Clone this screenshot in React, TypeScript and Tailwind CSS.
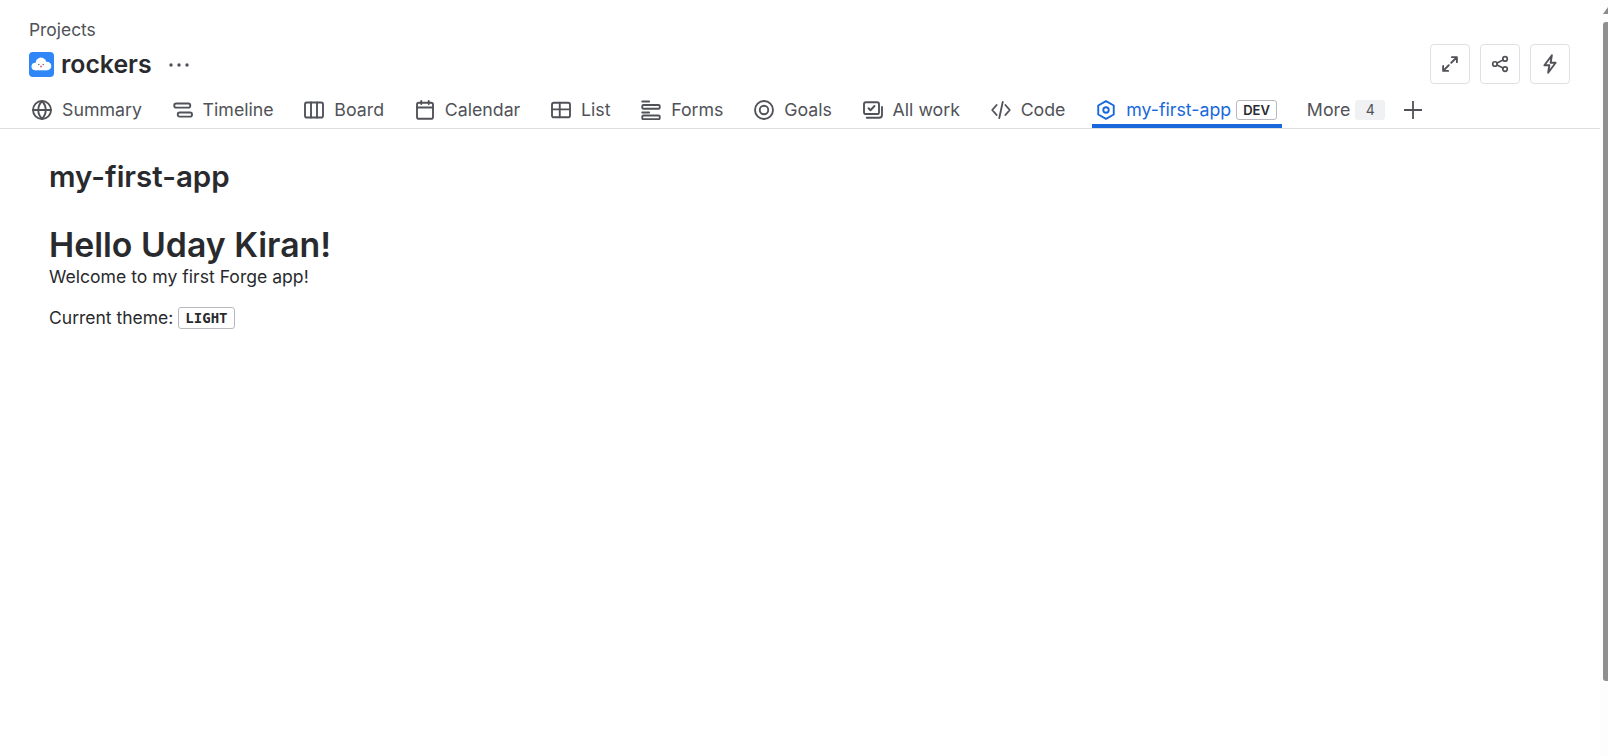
import React from "react";

const S = { fill: "none", stroke: "currentColor", strokeWidth: 1.5, strokeLinecap: "round", strokeLinejoin: "round" } as const;

const icons: Record<string, React.ReactNode> = {
  globe: <><circle cx="8" cy="8" r="7.2" /><path d="M.8 8h14.400M8 .8C10 3 11 5.400 11 8s-1 5-3 7.200C6 13 5 10.600 5 8s1-5 3-7.200Z" /></>,
  timeline: <><rect x="1" y="2.750" width="12.800" height="3.300" rx="1.500" /><rect x="3.800" y="10" width="11.400" height="3.300" rx="1.500" /></>,
  board: <><rect x=".8" y="2" width="14.400" height="12" rx="1.500" /><path d="M5.600 2v12M10.400 2v12" /></>,
  calendar: <><rect x="1.600" y="2.200" width="12.800" height="12.800" rx="1.500" /><path d="M1.600 6h12.800M5 .8v2.400M11 .8v2.400" /></>,
  list: <><rect x=".8" y="2.200" width="14.400" height="11.600" rx="1.500" /><path d="M.8 7.500h14.400M7 2.200v11.600" /></>,
  forms: <><path d="M1 1.200h5.500" /><rect x="1" y="4" width="14" height="3" rx="1" /><path d="M1 10h5.500" /><rect x="1" y="12.400" width="14" height="3" rx="1" /></>,
  goals: <><circle cx="8" cy="8" r="7.200" /><circle cx="8" cy="8" r="3.400" /></>,
  allwork: <><rect x=".8" y="1.800" width="12" height="9.400" rx="1.500" /><path d="m4.400 6.600 1.600 1.600 3.200-3.400M3 14.200h10a2.200 2.200 0 0 0 2.200-2.200V5.500" /></>,
  code: <><path d="M4.500 4 1 8l3.500 4M11.500 4 15 8l-3.500 4M9.400 1.500 6.600 14.500" /></>,
  hex: <><path d="M8 .9l6.200 3.500v7.200L8 15.100l-6.200-3.500V4.400Z" /><circle cx="8" cy="8" r="2.200" /></>,
};

function Glyph({ name, size = 20 }: { name: string; size?: number }) {
  return (
    <svg width={size} height={size} viewBox="0 0 16 16" {...S} className="shrink-0">
      {icons[name]}
    </svg>
  );
}

function Tab({ icon, label }: { icon: string; label: string }) {
  return (
    <div className="flex h-[37px] items-center gap-2.5 px-1 text-[#505258]">
      <Glyph name={icon} />
      <span className="text-[17.750px] leading-none">{label}</span>
    </div>
  );
}

function Square({ children }: { children: React.ReactNode }) {
  return (
    <div className="flex h-10 w-10 items-center justify-center rounded-[4px] border border-[#dfe0e2] text-[#505258]">
      {children}
    </div>
  );
}

export default function App() {
  return (
    <div className="flex h-[756px] w-full overflow-hidden bg-white text-[#292a2e] [font-family:Inter,'Noto_Sans',sans-serif]">
      <main className="min-w-0 flex-1">
        <header className="border-b border-[#dddee1]">
          <div className="flex items-start justify-between pt-[20px] pl-[29px] pr-[30px]">
            <div>
              <div className="text-[17.400px] leading-5 text-[#505258]">Projects</div>
              <div className="mt-[12px] flex h-[25px] items-center">
                <div className="flex h-[25px] w-[25px] items-center justify-center rounded-[4px] bg-[#2f86f6]">
                  <svg width="21" height="15" viewBox="0 0 21 15">
                    <g fill="#fff">
                      <circle cx="4.300" cy="9.500" r="3.800" />
                      <circle cx="10" cy="6" r="5.400" />
                      <circle cx="16" cy="9" r="4.300" />
                      <rect x="4" y="8" width="12" height="5.300" />
                    </g>
                    <circle cx="7.800" cy="7.500" r=".7" fill="#555" />
                    <circle cx="12.200" cy="7.500" r=".7" fill="#555" />
                    <circle cx="10" cy="9.500" r=".9" fill="#f0506e" />
                  </svg>
                </div>
                <span className="ml-[7px] text-[24.800px] font-semibold leading-none">rockers</span>
                <svg width="24" height="24" viewBox="0 0 24 24" fill="#505258" className="ml-[15px]">
                  <circle cx="4" cy="12" r="1.700" /><circle cx="12" cy="12" r="1.700" /><circle cx="20" cy="12" r="1.700" />
                </svg>
              </div>
            </div>
            <div className="mt-[24px] flex gap-[10px]">
              <Square>
                <svg width="20" height="20" viewBox="0 0 16 16" {...S}><path d="M9.500 2.500h4v4M13.500 2.500l-4.500 4.500M6.500 13.500h-4v-4M2.500 13.500l4.500-4.500" /></svg>
              </Square>
              <Square>
                <svg width="18" height="18" viewBox="0 0 16 16" {...S}><circle cx="12.500" cy="3.500" r="2" /><circle cx="3.500" cy="8" r="2" /><circle cx="12.500" cy="12.500" r="2" /><path d="M5.300 7.100l5.400-2.700M5.300 8.900l5.400 2.700" /></svg>
              </Square>
              <Square>
                <svg width="20" height="20" viewBox="0 0 16 16" {...S}><path d="M9.500 1 3.500 9h4l-1 6 6-8h-4Z" /></svg>
              </Square>
            </div>
          </div>
          <nav className="mt-[7px] flex items-center pl-[28px]">
            <div className="flex gap-[22.700px]">
              <Tab icon="globe" label="Summary" />
              <Tab icon="timeline" label="Timeline" />
              <Tab icon="board" label="Board" />
              <Tab icon="calendar" label="Calendar" />
              <Tab icon="list" label="List" />
              <Tab icon="forms" label="Forms" />
              <Tab icon="goals" label="Goals" />
              <Tab icon="allwork" label="All work" />
              <Tab icon="code" label="Code" />
              <div className="flex h-[37px] items-center gap-2.5 border-b-[4px] border-[#1868db] pl-1 pr-[5px] pt-[4px] text-[#1868db]">
                <Glyph name="hex" />
                <span className="text-[17.750px] leading-none">my-first-app</span>
                <span className="ml-[-5px] rounded-[3px] border border-[#b7b9be] px-[6px] text-[13px] font-semibold leading-[18px] text-[#292a2e]">DEV</span>
              </div>
            </div>
            <span className="ml-[25px] text-[17.750px] leading-none text-[#505258]">More</span>
            <span className="ml-[5px] flex h-5 w-[30px] items-center justify-center rounded-[3px] bg-[#f0f1f2] text-[14px] text-[#505258]">4</span>
            <svg width="20" height="20" viewBox="0 0 20 20" stroke="#505258" strokeWidth="1.800" className="ml-[18px]"><path d="M10 1v18M1 10h18" /></svg>
          </nav>
        </header>
        <section className="pl-[49px] pt-[31px]">
          <h1 className="text-[29.500px] font-semibold leading-8">my-first-app</h1>
          <h2 className="mt-[33px] text-[33.800px] font-semibold leading-10">Hello Uday Kiran!</h2>
          <p className="mt-[2px] text-[17.600px] leading-5">Welcome to my first Forge app!</p>
          <p className="mt-[20px] flex items-center text-[17.500px] leading-5">
            Current theme:
            <code className="ml-[5px] rounded-[3px] border border-[#b7b9be] px-[6px] text-[14px] font-bold leading-[20px] [font-family:'DejaVu_Sans_Mono',monospace]">LIGHT</code>
          </p>
        </section>
      </main>
      <aside className="flex w-2 shrink-0 flex-col items-start overflow-hidden bg-[#fdfdfd]">
        <div className="ml-[3px] mt-[7px] h-0 w-0 border-x-[5px] border-b-[7px] border-x-transparent border-b-[#8a8a8a]" />
        <div className="ml-[3px] mt-[8px] h-[659px] w-[5px] rounded-l-[3px] bg-[#8f8f8f]" />
      </aside>
    </div>
  );
}
